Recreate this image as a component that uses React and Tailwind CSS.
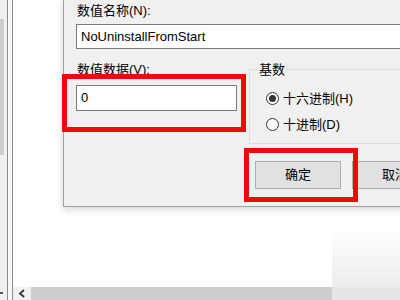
import React from "react";

const font = { fontFamily: '"Liberation Sans", "Noto Sans CJK SC", sans-serif' };

function Radio({ checked, label }) {
  return (
    <div className="flex items-center h-[17px]">
      <span className="w-[13px] h-[13px] rounded-full border border-[#333] bg-white flex items-center justify-center">
        {checked && <span className="w-[7px] h-[7px] rounded-full bg-[#333]" />}
      </span>
      <span className="ml-[4px] text-[13px] leading-[17px] text-black">{label}</span>
    </div>
  );
}

export default function App() {
  return (
    <div className="w-[400px] h-[300px] relative overflow-hidden bg-white flex" style={font}>
      {/* left pane edge */}
      <div className="w-[7px] h-full bg-[#f0f0f0] flex flex-col">
        <div className="mt-[19px] h-[136px] w-[4px] bg-[#cdcdcd]" />
        <div className="mt-auto mb-[6px] w-[3px] h-[2px] bg-[#555]" />
      </div>
      <div className="w-[1px] h-full bg-[#8c8c8c]" />
      <div className="w-[4px] h-full bg-[#f7f7f7]" />
      <div className="w-[1px] h-full bg-[#8c8c8c]" />

      {/* main white area */}
      <div className="flex-1 h-full flex flex-col">
        <div className="flex-1 bg-white" />
        <div className="h-[13px] flex">
          <div className="w-[18px] h-full bg-[#f0f0f0] flex items-center justify-center">
            <svg width="8" height="9" viewBox="0 0 8 9">
              <path d="M6 1 L2 4.5 L6 8" fill="none" stroke="#333" strokeWidth="1.8" />
            </svg>
          </div>
          <div className="w-[301px] h-full bg-[#cdcdcd]" />
          <div className="flex-1 h-full bg-[#e6e6e6]" />
        </div>
      </div>

      {/* faded corner */}
      <div className="absolute right-0 bottom-[13px] w-[68px] h-[60px] bg-gradient-to-b from-white/0 to-[#ececec]" />

      {/* dialog window */}
      <div className="absolute left-[63px] top-0 w-[400px] h-[207px] bg-[#f0f0f0] border-l border-b border-[#a0a0a0] shadow-[0_2px_8px_rgba(0,0,0,0.18)]">
        <div className="pl-[12px] pt-[2px] flex flex-col">
          <div className="h-[17px] text-[13px] leading-[17px] text-black ml-[1px]">数值名称(N):</div>
          <div className="mt-[5px] h-[25px] w-[340px] bg-white border border-[#7a7a7a] pl-[4px] flex items-center text-[13px] text-black">
            NoUninstallFromStart
          </div>

          <div className="mt-[12px] flex items-start">
            <div className="flex flex-col w-[161px]">
              <div className="h-[17px] text-[13px] leading-[17px] text-black ml-[1px]">数值数据(V):</div>
              <div className="mt-[7px] h-[26px] bg-white border border-[#7a7a7a] pl-[4px] flex items-center text-[13px] text-black">
                0
              </div>
            </div>
            <fieldset className="ml-[12px] w-[200px] border border-[#dcdcdc] pl-[16px] pb-[10px]">
              <legend className="ml-[-8px] px-[1px] text-[13px] leading-[17px] text-black">基数</legend>
              <div className="mt-[12px] flex flex-col gap-[9px]">
                <Radio checked label="十六进制(H)" />
                <Radio label="十进制(D)" />
              </div>
            </fieldset>
          </div>

          <div className="mt-[17px] ml-[179px] flex gap-[11px]">
            <div className="w-[86px] h-[28px] bg-[#e1e1e1] border border-[#adadad] flex items-center justify-center text-[13px] text-black">
              确定
            </div>
            <div className="w-[86px] h-[28px] bg-[#e1e1e1] border border-[#adadad] flex items-center justify-center text-[13px] text-black">
              取消
            </div>
          </div>
        </div>

        {/* red highlight boxes */}
        <div className="absolute left-[-2px] top-[74px] w-[184px] h-[58px] border-[5px] border-[#ee0a0a]" />
        <div className="absolute left-[180px] top-[148px] w-[114px] h-[54px] border-[5px] border-[#ee0a0a]" />
      </div>
    </div>
  );
}
